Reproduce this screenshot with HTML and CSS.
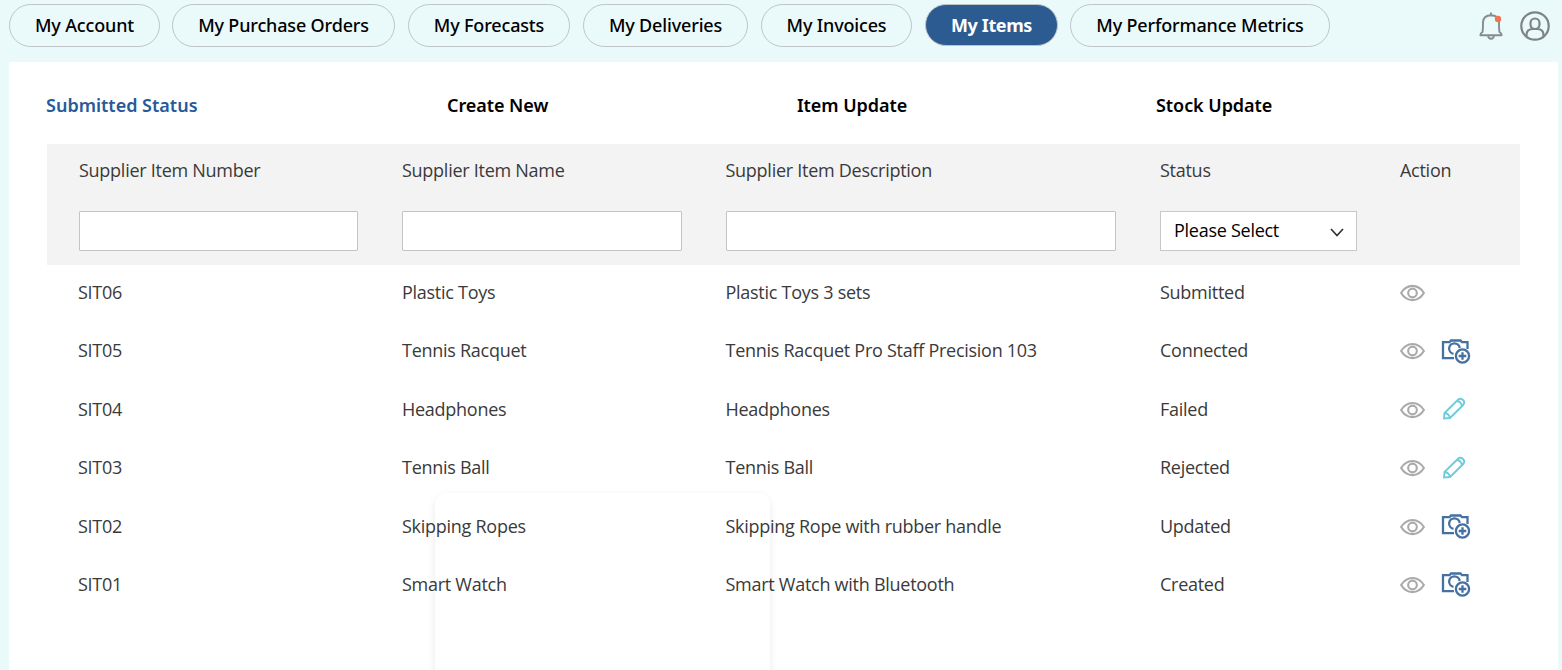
FILE: index.html
```html
<!DOCTYPE html>
<html lang="en">
<head>
<meta charset="utf-8">
<title>My Items</title>
<link rel="stylesheet" href="styles.css">
</head>
<body>
<svg class="sprite" aria-hidden="true">
  <symbol id="eye" viewBox="0 0 26 18"><path d="M1.200 9C7-.8 19-.8 24.800 9 19 18.800 7 18.800 1.200 9Z"/><circle cx="13" cy="9" r="4.500"/></symbol>
  <symbol id="camera" viewBox="0 0 30 28"><path d="M13 21.200H2V5.200H8.500L10 3.500H19.500L21 5.200H26.500V12M12.500 16.800A5.300 5.300 0 1 1 18.700 11"/><circle cx="21.500" cy="19" r="6.600"/><path d="M21.500 15.200V22.800M17.700 19H25.300"/></symbol>
  <symbol id="pencil" viewBox="0 0 24 24"><path d="M2 21.500 2.500 16 16 2.800Q18.500.8 21 3 23.300 5.500 21.200 8L8 21ZM2.500 16Q7 16.500 8 21M15 4Q19 4.500 20 9"/></symbol>
</svg>
<header class="topbar">
  <nav class="tabs">
    <a class="tab account">My Account</a>
    <a class="tab orders">My Purchase Orders</a>
    <a class="tab forecasts">My Forecasts</a>
    <a class="tab deliveries">My Deliveries</a>
    <a class="tab invoices">My Invoices</a>
    <a class="tab items active">My Items</a>
    <a class="tab metrics">My Performance Metrics</a>
  </nav>
  <div class="tools">
    <svg class="bell" viewBox="0 0 24 30"><path d="M1.500 24.300Q1 22.800 3.500 21 4 19 4 11 4.500 4.500 12 4.200 19.500 4.500 20 11 20 19 20.500 21 23 22.800 22.500 24.300ZM12 4V1.500M9 24.500Q9.300 27.800 12 27.800 14.700 27.800 15 24.500"/><circle cx="19" cy="8" r="3.200"/></svg>
    <svg class="user" viewBox="0 0 30 30"><circle cx="15" cy="15" r="13.700"/><rect x="10.500" y="7.500" width="9" height="10.500" rx="4.500"/><path d="M6.500 25.500V24Q6.500 18 13 18H17Q23.500 18 23.500 24V25.500"/></svg>
  </div>
</header>
<main class="panel">
  <nav class="subtabs">
    <a class="current">Submitted Status</a><a>Create New</a><a>Item Update</a><a>Stock Update</a>
  </nav>
  <section class="table">
    <div class="head">
      <div class="row labels"><span>Supplier Item Number</span><span>Supplier Item Name</span><span>Supplier Item Description</span><span>Status</span><span>Action</span></div>
      <div class="row filters">
        <input class="field" aria-label="Supplier Item Number"><input class="field" aria-label="Supplier Item Name"><input class="field" aria-label="Supplier Item Description">
        <div class="select"><span>Please Select</span><svg viewBox="0 0 14 9"><path d="M1 1 7 7.500 13 1"/></svg></div>
      </div>
    </div>
    <div class="row entry"><span class="code">SIT06</span><span>Plastic Toys</span><span>Plastic Toys 3 sets</span><span>Submitted</span><div class="actions"><svg class="eye"><use href="#eye"/></svg></div></div>
    <div class="row entry"><span class="code">SIT05</span><span>Tennis Racquet</span><span>Tennis Racquet Pro Staff Precision 103</span><span>Connected</span><div class="actions"><svg class="eye"><use href="#eye"/></svg><svg class="camera"><use href="#camera"/></svg></div></div>
    <div class="row entry"><span class="code">SIT04</span><span>Headphones</span><span>Headphones</span><span>Failed</span><div class="actions"><svg class="eye"><use href="#eye"/></svg><svg class="pencil"><use href="#pencil"/></svg></div></div>
    <div class="row entry"><span class="code">SIT03</span><span>Tennis Ball</span><span>Tennis Ball</span><span>Rejected</span><div class="actions"><svg class="eye"><use href="#eye"/></svg><svg class="pencil"><use href="#pencil"/></svg></div></div>
    <div class="row entry"><span class="code">SIT02</span><span>Skipping Ropes</span><span>Skipping Rope with rubber handle</span><span>Updated</span><div class="actions"><svg class="eye"><use href="#eye"/></svg><svg class="camera"><use href="#camera"/></svg></div></div>
    <div class="row entry"><span class="code">SIT01</span><span>Smart Watch</span><span>Smart Watch with Bluetooth</span><span>Created</span><div class="actions"><svg class="eye"><use href="#eye"/></svg><svg class="camera"><use href="#camera"/></svg></div></div>
  </section>
  <div class="popover"></div>
</main>
</body>
</html>
```
FILE: styles.css
```css
* { box-sizing: border-box; }
body { margin: 0; height: 670px; overflow: hidden; background: #eafafb; color: #3a3a3a; font: 400 18px/26px "Open Sans", sans-serif; }
svg { fill: none; flex: none; }
.sprite { position: absolute; width: 0; height: 0; }
.topbar { display: flex; justify-content: space-between; height: 62px; padding: 4px 12px 0 9px; }
.tabs { display: flex; align-items: flex-start; gap: 13px; }
.tab { display: flex; justify-content: center; height: 43px; padding-top: 7px; border: 1px solid #bec4c5; border-radius: 22px; color: #000; font-family: "Noto Sans", sans-serif; font-weight: 500; letter-spacing: -.16px; white-space: nowrap; }
.account { width: 151px; margin-right: -1px; }
.orders { width: 223px; }
.forecasts { width: 162px; }
.deliveries { width: 165px; }
.invoices { width: 151px; }
.items { width: 133px; margin-right: -1px; }
.metrics { width: 260px; }
.active { height: 42px; background: #2c5b92; color: #fff; font-weight: 700; letter-spacing: -.38px; }
.tools { display: flex; gap: 17px; padding-top: 7px; }
.bell { width: 24px; height: 30px; stroke: #858c8c; stroke-width: 1.9; }
.bell circle { fill: #ee7650; stroke: none; }
.user { width: 30px; height: 30px; stroke: #7e8484; stroke-width: 2.200; }
.panel { position: relative; height: 608px; margin: 0 4px 0 9px; padding: 0 38px; background: #fff; overflow: hidden; }
.subtabs { display: grid; grid-template-columns: 401px 350px 359px 1fr; height: 82px; padding-top: 30px; margin-left: -1px; color: #000; font-family: "Noto Sans", sans-serif; font-weight: 600; letter-spacing: -.06px; }
.current { color: #275a98; letter-spacing: 0; }
.row { display: grid; grid-template-columns: 323px 323.500px 434.500px 240px 1fr; padding-left: 32px; }
.labels, .entry, .select { letter-spacing: -.27px; }
.code { margin-left: -1px; }
.head { height: 121px; padding-top: 13px; background: #f3f3f3; }
.filters { margin-top: 28px; align-items: start; }
.field { height: 40px; margin: 0 44px 0 0; padding: 0; border: 1px solid #c4c4c4; border-radius: 1px; background: #fff; }
.select { display: flex; align-items: center; justify-content: space-between; width: 197px; height: 40px; padding: 0 12px 2px 13px; border: 1px solid #c8c8c8; background: #fff; color: #000; }
.select svg { width: 14px; height: 9px; margin-top: 5px; stroke: #333; stroke-width: 1.7; }
.entry { height: 58.400px; padding-top: 14px; }
.actions { display: flex; height: 28px; gap: 17px; align-items: center; }
.eye { width: 25px; height: 18px; margin-right: -1px; stroke: #aaa; stroke-width: 2.200; }
.camera { width: 30px; height: 28px; margin-top: -1px; stroke: #4470a2; stroke-width: 2.300; }
.pencil { width: 24px; height: 24px; margin: -1px 0 0 1px; stroke: #70ccd8; stroke-width: 1.900; }
.popover { position: absolute; left: 426px; top: 431px; width: 335px; height: 230px; border-radius: 12px; box-shadow: 0 3px 8px rgba(0, 0, 0, .09); }
```
